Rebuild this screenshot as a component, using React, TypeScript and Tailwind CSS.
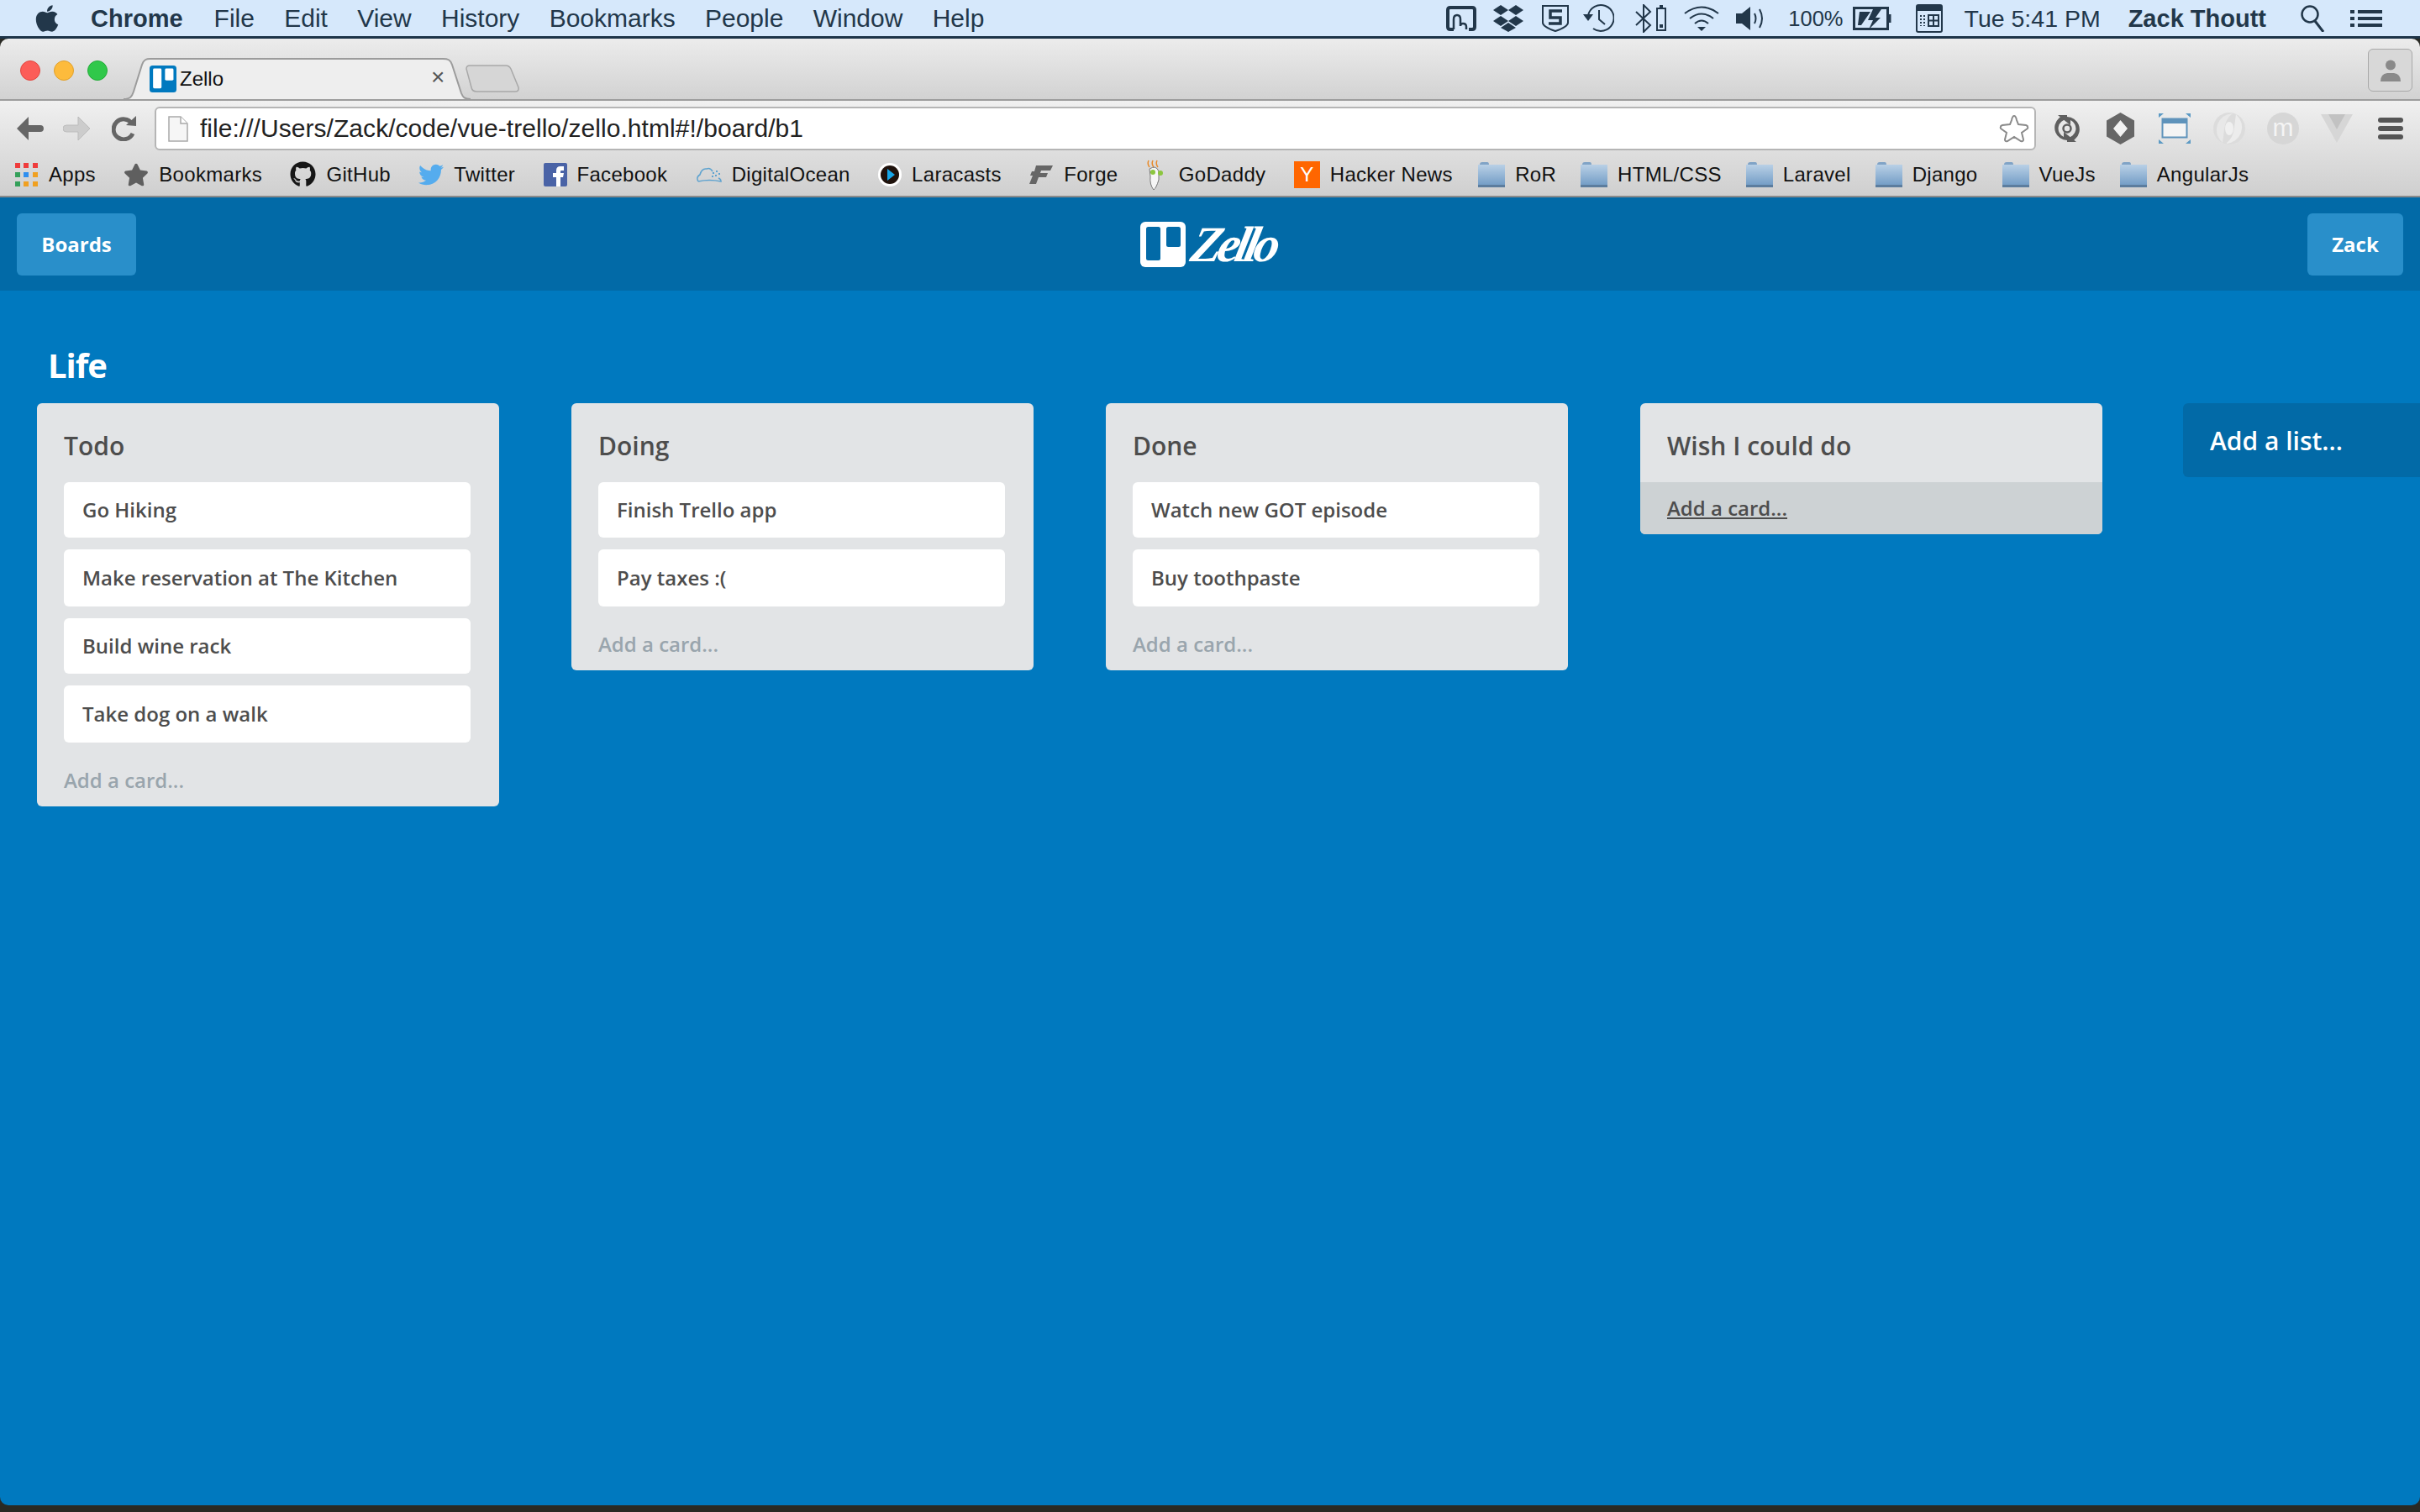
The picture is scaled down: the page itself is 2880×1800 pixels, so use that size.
import React from "react";
import { FaApple, FaGithub, FaTwitter, FaStar } from "react-icons/fa";

const Ink = "#22374a";

function Folder() {
  return (
    <svg width="32" height="30" viewBox="0 0 32 30" className="block">
      <defs>
        <linearGradient id="fold" x1="0" y1="0" x2="0" y2="1">
          <stop offset="0" stopColor="#b9d0e6" />
          <stop offset="1" stopColor="#6f9ac4" />
        </linearGradient>
      </defs>
      <path d="M2 3 Q2 0 5 0 H11 Q13 0 13 3 V4 H2Z" fill="#80a3c6" />
      <rect x="0" y="3" width="32" height="26" fill="url(#fold)" />
      <rect x="0" y="27" width="32" height="3" fill="#5c7d9e" />
    </svg>
  );
}

function AppsIcon() {
  const c = ["#ef3c3c", "#ef3c3c", "#ef3c3c", "#34a05a", "#2f8fef", "#f0a020", "#34a05a", "#f0a020", "#f0a020"];
  return (
    <div className="grid grid-cols-3 gap-[5px] w-[26px]">
      {c.map((x, i) => (
        <svg key={i} width="6" height="6" className="block"><rect width="6" height="6" fill={x} /></svg>
      ))}
    </div>
  );
}

function Bookmark({ w, icon, label }: { w: string; icon: React.ReactNode; label: string }) {
  return (
    <div className="flex items-center gap-[12px]">
      <div className={`${w} flex items-center justify-start`}>{icon}</div>
      <span className="text-[24px] leading-[30px] text-[#111111] tracking-[0.3px]">{label}</span>
    </div>
  );
}

function TrelloMark({ size, bg, fg }: { size: number; bg: string; fg: string }) {
  return (
    <svg width={size} height={size} viewBox="0 0 54 54" className="block">
      <rect width="54" height="54" rx="6" fill={bg} />
      <rect x="7" y="6" width="17" height="40" rx="2.5" fill={fg} />
      <rect x="31" y="6" width="17" height="24" rx="2.5" fill={fg} />
    </svg>
  );
}

function StatusIcons() {
  return (
    <div className="flex items-center" style={{ color: Ink }}>
      <svg width="36" height="32" viewBox="0 0 36 32" className="block" fill="none" stroke="currentColor">
        <path d="M9 29H5Q2 29 2 26V6Q2 3 5 3H31Q34 3 34 6V26Q34 29 31 29H27" strokeWidth="4" />
        <path d="M9 29V17Q9 12 13 12Q17 12 17 17V25Q17 22 20 22Q24 22 24 26V29" strokeWidth="2.5" />
      </svg>
      <svg width="36" height="32" viewBox="0 0 36 32" className="block ml-[20px]" fill="currentColor">
        <path d="M9 0 18 6 9 12 0 6Z M27 0 36 6 27 12 18 6Z M9 13 18 19 9 25 0 19Z M27 13 36 19 27 25 18 19Z M18 21 27 27 18 32 9 27Z" />
      </svg>
      <svg width="32" height="32" viewBox="0 0 32 32" className="block ml-[22px]" fill="none" stroke="currentColor">
        <path d="M1 1H31V21Q31 26 16 31Q1 26 1 21Z" strokeWidth="2" />
        <path d="M24 7H10V15H22V22H8" strokeWidth="3.5" />
      </svg>
      <svg width="38" height="36" viewBox="0 0 38 36" className="block ml-[16px]" fill="none" stroke={Ink} strokeWidth="2">
        <path d="M7 14A15.5 15.5 0 1 1 13 30" />
        <path d="M1 13H13L7 21Z" fill={Ink} stroke="none" />
        <path d="M20 8V19L27 25" />
      </svg>
      <svg width="38" height="34" viewBox="0 0 38 34" className="block ml-[25px]" fill="none" stroke="currentColor" strokeWidth="2">
        <path d="M1 9 18 25 10 33V1L18 9 1 25" />
        <rect x="26" y="5" width="10" height="26" />
        <rect x="29" y="1" width="4" height="4" fill="currentColor" stroke="none" />
        <rect x="29" y="24" width="4" height="4" fill="currentColor" stroke="none" />
      </svg>
      <svg width="42" height="30" viewBox="0 0 42 30" className="block ml-[20px]" fill="none" stroke="currentColor" strokeWidth="2">
        <path d="M1 9Q21 -6 41 9" />
        <path d="M7 15Q21 4 35 15" />
        <path d="M13 21Q21 14 29 21" />
        <path d="M16 25H26L21 30Z" fill="currentColor" stroke="none" />
      </svg>
      <svg width="34" height="30" viewBox="0 0 34 30" className="block ml-[20px]" fill="none" stroke="currentColor" strokeWidth="2">
        <path d="M0 9H7L17 1V29L7 21H0Z" fill="currentColor" stroke="none" />
        <path d="M22 9Q25 15 22 21" />
        <path d="M28 4Q34 15 28 26" />
      </svg>
      <span className="ml-[28px] text-[25.5px] leading-[32px]">100%</span>
      <svg width="46" height="28" viewBox="0 0 46 28" className="block ml-[11px]" fill="none" stroke="currentColor">
        <rect x="1.5" y="1.5" width="40" height="25" strokeWidth="3" />
        <path d="M44 9V19" strokeWidth="3" />
        <path d="M8 6H21L10 22H6Z M24 3H34L27 13H33L19 27 24 16H18Z" fill="currentColor" stroke="none" />
      </svg>
      <svg width="32" height="34" viewBox="0 0 32 34" className="block ml-[29px]" fill="none" stroke="currentColor">
        <rect x="1" y="1" width="30" height="32" rx="2" strokeWidth="2" />
        <rect x="1" y="1" width="30" height="7" fill="currentColor" stroke="none" />
        <path d="M6 13V26M10 13V26" strokeWidth="2" strokeDasharray="2 2" />
        <path d="M15 13H27V26H15ZM21 13V26M15 19.500H27" strokeWidth="2" />
      </svg>
      <span className="ml-[26px] text-[28.5px] leading-[34px]">Tue 5:41 PM</span>
      <span className="ml-[33px] text-[29px] leading-[34px] font-bold">Zack Thoutt</span>
      <svg width="30" height="32" viewBox="0 0 30 32" className="block ml-[41px]" fill="none" stroke="currentColor" strokeWidth="2.5">
        <circle cx="11" cy="11" r="9.500" />
        <path d="M17 19 27 32" strokeWidth="3" />
      </svg>
      <svg width="38" height="20" viewBox="0 0 38 20" className="block ml-[29px]" fill="currentColor">
        <path d="M0 0H5V4H0ZM9 0H38V4H9ZM0 8H5V12H0ZM9 8H38V12H9ZM0 16H5V20H0ZM9 16H38V20H9Z" />
      </svg>
    </div>
  );
}

function ToolbarIcons() {
  return (
    <div className="flex items-center ml-[20px] pr-[20px]">
      <svg width="34" height="36" viewBox="0 0 34 36" className="block" fill="none">
        <path d="M10 3H17V7A11 11 0 0 0 13 28V22L28 34H17V32A15 15 0 0 1 7 6Z" fill="#5f5f5f" />
        <path d="M24 33H17V29A11 11 0 0 0 21 8V14L6 2H17V4A15 15 0 0 1 27 30Z" fill="#5f5f5f" />
        <circle cx="17" cy="18" r="4.500" stroke="#5f5f5f" strokeWidth="2.500" />
      </svg>
      <svg width="33" height="38" viewBox="0 0 33 38" className="block ml-[30px]">
        <path d="M16.500 0 33 9.500V28.500L16.500 38 0 28.500V9.500Z" fill="#666666" />
        <path d="M16.500 9 25 19 16.500 29 8 19Z" fill="#f2f2f2" />
      </svg>
      <svg width="38" height="36" viewBox="0 0 38 36" className="block ml-[29px]">
        <path d="M0 0H6L0 5ZM38 0H32L38 5ZM0 36H6L0 31ZM38 36H32L38 31Z" fill="#5c9ac4" />
        <rect x="4.500" y="6.500" width="29" height="22" fill="#f4f4f4" stroke="#5f93bb" strokeWidth="2" />
        <rect x="4" y="6" width="30" height="6" fill="#5f93bb" />
      </svg>
      <svg width="38" height="38" viewBox="0 0 38 38" className="block ml-[27px]">
        <circle cx="19" cy="19" r="19" fill="#dcdcdc" />
        <path d="M27 2Q37 12 33 24Q28 36 15 37Q24 30 25 18Q26 9 27 2Z" fill="#ececec" />
        <path d="M11 36Q1 26 5 14Q10 2 23 1Q14 8 13 20Q12 29 11 36Z" fill="#e8e8e8" />
        <ellipse cx="19" cy="19" rx="5" ry="8" fill="#f0f0f0" />
      </svg>
      <div className="ml-[26px] w-[38px] h-[38px] rounded-full bg-[#d6d6d6] flex items-center justify-center text-[#f4f4f4] text-[30px] leading-[30px] pb-[3px]">m</div>
      <svg width="38" height="34" viewBox="0 0 38 34" className="block ml-[26px]">
        <path d="M0 0H38L19 34Z" fill="#d6d6d6" />
        <path d="M9 0H29L19 18Z" fill="#c2c2c2" />
      </svg>
      <svg width="30" height="26" viewBox="0 0 30 26" className="block ml-[30px]" fill="#555555">
        <rect width="30" height="6" rx="3" />
        <rect y="10" width="30" height="6" rx="3" />
        <rect y="20" width="30" height="6" rx="3" />
      </svg>
    </div>
  );
}

const lists = [
  { name: "Todo", cards: ["Go Hiking", "Make reservation at The Kitchen", "Build wine rack", "Take dog on a walk"] },
  { name: "Doing", cards: ["Finish Trello app", "Pay taxes :("] },
  { name: "Done", cards: ["Watch new GOT episode", "Buy toothpaste"] },
  { name: "Wish I could do", cards: [] as string[], hover: true },
];

export default function App() {
  return (
    <div className="w-[2880px] h-[1800px] overflow-hidden flex flex-col bg-[#2a2a24] font-['Liberation_Sans',sans-serif]">
      {/* macOS menu bar */}
      <div className="h-[46px] shrink-0 bg-[#d6e8fb] border-b-[3px] border-[#1d3448] flex items-center justify-between pr-[45px]">
        <div className="flex items-center text-[30px] leading-[34px]" style={{ color: Ink }}>
          <FaApple className="ml-[38px] mr-[34px] text-[#22374a]" size={36} />
          <span className="font-bold text-[29px] mr-[37px]">Chrome</span>
          <div className="flex gap-[35.3px]">
            {["File", "Edit", "View", "History", "Bookmarks", "People", "Window", "Help"].map((m) => (
              <span key={m}>{m}</span>
            ))}
          </div>
        </div>
        <StatusIcons />
      </div>

      {/* tab strip */}
      <div className="h-[72px] shrink-0 rounded-t-[10px] bg-gradient-to-b from-[#ececec] to-[#d2d2d2] flex items-end justify-between bg-[#d2d2d2]">
        <div className="flex items-end h-full">
          <div className="flex gap-[16px] pl-[24px] pt-[26px] self-start w-[147px]">
            <div className="w-[24px] h-[24px] rounded-full bg-[#fc5d58] border border-[#e2463f]" />
            <div className="w-[24px] h-[24px] rounded-full bg-[#fdbb3c] border border-[#e0a02c]" />
            <div className="w-[24px] h-[24px] rounded-full bg-[#30c84a] border border-[#25ab3a]" />
          </div>
          <div className="relative w-[413px] h-[50px] -mb-px flex items-center">
            <svg width="413" height="50" viewBox="0 0 413 50" className="absolute inset-0 block">
              <path d="M0 49C8 49 10 46 12 40L22 8C24 2 27 1 32 1H380C386 1 389 2 391 8L402 42C404 47 406 49 413 49" fill="#eeeeee" stroke="#9b9b9b" strokeWidth="2" />
            </svg>
            <div className="relative ml-[31px] flex items-center">
              <TrelloMark size={32} bg="#0079bf" fg="#ffffff" />
              <span className="ml-[4px] text-[24px] leading-[30px] text-[#111111]">Zello</span>
            </div>
            <span className="absolute left-[366px] top-[6px] text-[28px] leading-[34px] text-[#555555]">×</span>
          </div>
          <svg width="64" height="33" viewBox="0 0 64 33" className="block -ml-[6px] mb-[8px]">
            <path d="M1 5Q1 1 5 1H48Q52 1 54 5L63 27Q64 32 59 32H13Q8 32 7 27Z" fill="#d6d6d6" stroke="#a8a8a8" strokeWidth="1.500" />
          </svg>
        </div>
        <div className="self-start mt-[12px] mr-[9px] w-[53px] h-[51px] rounded-[6px] border border-[#a8a8a8] bg-[#d8d8d8] flex items-center justify-center">
          <svg width="24" height="26" viewBox="0 0 24 26" className="block">
            <circle cx="12" cy="6.500" r="6" fill="#8a8a8a" />
            <path d="M0 26Q0 17 8 16H16Q24 17 24 26Z" fill="#8a8a8a" />
          </svg>
        </div>
      </div>

      {/* toolbar + bookmarks */}
      <div className="h-[117px] shrink-0 border-t-2 border-b-2 border-t-[#9c9c9c] border-b-[#8a8a8a] bg-gradient-to-b from-[#f0f0f0] to-[#cfcfcf] flex flex-col">
        <div className="h-[62px] shrink-0 flex items-center pl-[20px] pt-[4px]">
          <svg width="32" height="28" viewBox="0 0 32 28" className="block" fill="#666666">
            <path d="M14 0 0 14 14 28V18H28Q32 18 32 14Q32 10 28 10H14Z" />
          </svg>
          <svg width="32" height="28" viewBox="0 0 32 28" className="block ml-[23px]" fill="#cccccc" stroke="#bdbdbd">
            <path d="M18 0 32 14 18 28V18H4Q0 18 0 14Q0 10 4 10H18Z" />
          </svg>
          <svg width="30" height="30" viewBox="0 0 30 30" className="block ml-[26px]" fill="none">
            <path d="M24 9A12 12 0 1 0 25 21" stroke="#666666" strokeWidth="5" />
            <path d="M17 11 29 0V12Z" fill="#666666" />
          </svg>
          <div className="ml-[21px] w-[2241px] h-[52px] bg-white border-2 border-[#b5b5b5] rounded-[6px] flex items-center">
            <svg width="24" height="31" viewBox="0 0 24 31" className="block ml-[14px]">
              <path d="M1 1H15L23 9V30H1Z" fill="#f6f6f6" stroke="#a9a9a9" strokeWidth="1.500" />
              <path d="M15 1V9H23" fill="#ffffff" stroke="#a9a9a9" strokeWidth="1.500" />
            </svg>
            <span className="ml-[14px] text-[30px] leading-[36px] text-[#222222] flex-1 tracking-[0.05px]">file:///Users/Zack/code/vue-trello/zello.html#!/board/b1</span>
            <svg width="36" height="34" viewBox="0 0 36 34" className="block mr-[6px]" fill="#ffffff" stroke="#8a8a8a" strokeWidth="2">
              <path d="M18 2Q20 2 21 7L23 12 32 13Q35 14 34 17L27 22 29 30Q29 33 26 32L18 27 10 32Q7 33 7 30L9 22 2 17Q1 14 4 13L13 12 15 7Q16 2 18 2Z" />
            </svg>
          </div>
          <ToolbarIcons />
        </div>
        <div className="flex items-center gap-[33.4px] pl-[18px] flex-1">
          <Bookmark w="w-[28px]" icon={<AppsIcon />} label="Apps" />
          <Bookmark w="w-[30px]" icon={<FaStar size={30} className="text-[#5f5f5f]" />} label="Bookmarks" />
          <Bookmark w="w-[31px]" icon={<FaGithub size={31} className="text-[#161616]" />} label="GitHub" />
          <Bookmark w="w-[30px]" icon={<FaTwitter size={30} className="text-[#55acee]" />} label="Twitter" />
          <Bookmark
            w="w-[28px]"
            icon={
              <svg width="28" height="28" viewBox="0 0 28 28" className="block">
                <rect width="28" height="28" rx="2" fill="#4a63a6" />
                <path d="M15 28V17H11V12H15V9Q15 4 20 4H24V9H21Q20 9 20 10V12H24L23 17H20V28Z" fill="#ffffff" />
              </svg>
            }
            label="Facebook"
          />
          <Bookmark
            w="w-[31px]"
            icon={
              <svg width="31" height="20" viewBox="0 0 31 20" className="block" fill="none" stroke="#5fa3cf" strokeWidth="1.500">
                <path d="M3 18Q0 13 5 10Q7 2 13 3Q17 1 20 6" />
                <path d="M3 18Q16 15 30 18Q30 15 27 14" />
                <path d="M20 8H22M24 6H26M23 11H25M27 9H29M19 12H21" strokeWidth="2" />
              </svg>
            }
            label="DigitalOcean"
          />
          <Bookmark
            w="w-[28px]"
            icon={
              <svg width="28" height="28" viewBox="0 0 28 28" className="block">
                <circle cx="14" cy="14" r="14" fill="#ffffff" />
                <circle cx="14" cy="14" r="11" fill="#1f120c" />
                <path d="M11 7 20 14 11 21Z" fill="#17a6e8" />
              </svg>
            }
            label="Laracasts"
          />
          <Bookmark
            w="w-[29px]"
            icon={
              <svg width="28" height="22" viewBox="0 0 28 22" className="block" fill="#666666">
                <path d="M8 0H28L25 6H14L13 9H22L20 14H11L8 22H0L4 12H1L3 7H6Z" />
              </svg>
            }
            label="Forge"
          />
          <Bookmark
            w="w-[27px]"
            icon={
              <svg width="24" height="36" viewBox="0 0 24 36" className="block">
                <path d="M3 1Q1 5 4 9M8 1Q6 5 9 9M13 1Q11 5 14 9" fill="none" stroke="#e88a2a" strokeWidth="1.500" />
                <path d="M4 11Q12 6 15 14V24Q12 34 9 36Q4 30 5 20Z" fill="#f6f6f6" stroke="#777777" strokeWidth="1" />
                <circle cx="8" cy="15" r="3" fill="#8cc63f" />
                <circle cx="17" cy="16" r="3" fill="#8cc63f" />
              </svg>
            }
            label="GoDaddy"
          />
          <Bookmark
            w="w-[31px]"
            icon={
              <div className="w-[31px] h-[32px] bg-[#ff6600] text-white text-[24px] leading-[32px] text-center">Y</div>
            }
            label="Hacker News"
          />
          <div className="flex items-center gap-[29px] -ml-[3px]">
            {["RoR", "HTML/CSS", "Laravel", "Django", "VueJs", "AngularJs"].map((f) => (
              <Bookmark key={f} w="w-[32px]" icon={<Folder />} label={f} />
            ))}
          </div>
        </div>
      </div>

      {/* Zello header */}
      <div className="h-[111px] shrink-0 bg-[#026aa7] flex items-center justify-between px-[20px] font-['Open_Sans',sans-serif]">
        <button className="h-[74px] w-[142px] rounded-[6px] bg-[#298fca] text-white text-[24px] font-bold">Boards</button>
        <div className="flex items-center gap-[8px] text-white mr-[30px]">
          <TrelloMark size={54} bg="#ffffff" fg="#026aa7" />
          <span className="inline-block -skew-x-12 font-['Liberation_Serif',serif] italic font-bold text-[60px] leading-[60px] tracking-[-5.5px] pr-[3px]">Zello</span>
        </div>
        <button className="h-[74px] w-[114px] rounded-[6px] bg-[#298fca] text-white text-[24px] font-bold">Zack</button>
      </div>

      {/* board */}
      <div className="flex-1 bg-[#0079bf] rounded-b-[10px] font-['Open_Sans',sans-serif] mb-[8px]">
        <div className="h-[134px] pt-[44px] pl-[57px] flex items-center text-white text-[40px] font-bold tracking-[-1px]">Life</div>
        <div className="flex items-start pl-[44px]">
          <div className="flex items-start gap-[86px]">
            {lists.map((l) => (
              <div key={l.name} className="w-[550px] rounded-[6px] bg-[#e2e4e6] overflow-hidden">
                <div className="h-[94px] pt-[6px] pl-[32px] flex items-center text-[30px] font-semibold text-[#4d4d4d]">{l.name}</div>
                {l.cards.length > 0 && (
                  <div className="flex flex-col gap-[14px] px-[32px] mb-[14px]">
                    {l.cards.map((c) => (
                      <div key={c} className="w-[484px] odd:h-[66px] even:h-[68px] rounded-[6px] bg-white pl-[22px] flex items-center text-[24px] font-semibold text-[#4d4d4d]">
                        {c}
                      </div>
                    ))}
                  </div>
                )}
                <div className={`h-[62px] pl-[32px] flex items-center text-[24px] font-semibold ${l.hover ? "bg-[#cdd2d4] text-[#4d4d4d] underline" : "text-[#99a5ad]"}`}>
                  Add a card...
                </div>
              </div>
            ))}
          </div>
          <div className="ml-[96px] flex-1 h-[88px] rounded-l-[6px] bg-[#026aa7] pl-[32px] flex items-center text-white text-[30px] font-semibold">
            Add a list...
          </div>
        </div>
      </div>
    </div>
  );
}
